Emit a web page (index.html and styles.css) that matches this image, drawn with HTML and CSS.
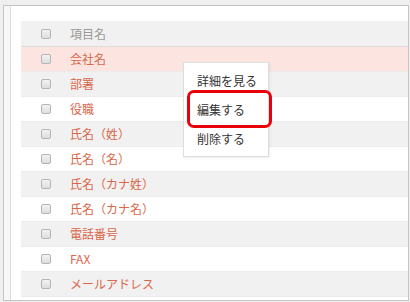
FILE: index.html
```html
<!DOCTYPE html>
<html lang="ja">
<head>
    <meta charset="UTF-8">
    <title>項目名一覧</title>
    <link rel="stylesheet" href="styles.css">
</head>
<body>
    <div class="window">
        <div class="panel">
            <div class="item-table">
                <div class="row head"><span class="check"></span><span class="label">項目名</span></div>
                <div class="row hover"><span class="check"></span><span class="label">会社名</span></div>
                <div class="row"><span class="check"></span><span class="label">部署</span></div>
                <div class="row"><span class="check"></span><span class="label">役職</span></div>
                <div class="row"><span class="check"></span><span class="label">氏名（姓）</span></div>
                <div class="row"><span class="check"></span><span class="label">氏名（名）</span></div>
                <div class="row"><span class="check"></span><span class="label">氏名（カナ姓）</span></div>
                <div class="row"><span class="check"></span><span class="label">氏名（カナ名）</span></div>
                <div class="row"><span class="check"></span><span class="label">電話番号</span></div>
                <div class="row"><span class="check"></span><span class="label">FAX</span></div>
                <div class="row"><span class="check"></span><span class="label">メールアドレス</span></div>
            </div>

            <!-- context menu -->
            <ul class="menu">
                <li>詳細を見る</li>
                <li>編集する</li>
                <li>削除する</li>
            </ul>
            <div class="callout"></div>
        </div>
    </div>
</body>
</html>
```

FILE: styles.css
```css
body {
    margin: 0;
    background-color: #efefef;
    font-family: "Noto Sans CJK JP", "Liberation Sans", sans-serif;
    font-size: 12px;
    height: 302px;
    overflow: hidden;
}

.window {
    margin: 5px 1px 0 3px;
    height: 294px;
    border: 1px solid #c4c4c4;
    background-color: #f7f7f7;
    padding-left: 6px;
}

/* White content area */
.panel {
    position: relative;
    height: 100%;
    box-sizing: border-box;
    border-left: 1px solid #dcdcdc;
    background-color: #fff;
    padding: 15px 0 0 10px;
    overflow: hidden;
}

.item-table {
    width: 400px;
}

.row {
    display: flex;
    align-items: center;
    height: 25px;
    box-sizing: border-box;
    border-bottom: 1px solid #ececec;
    color: #d9674a;
}

.row:nth-child(odd) {
    background-color: #f1f1f1;
}

.row.head {
    height: 26px;
    color: #999;
    border-bottom-color: #dcdcdc;
}

.row.hover {
    background-color: #fce5e1;
}

.check {
    width: 8px;
    height: 8px;
    margin-left: 20px;
    border: 1px solid #b5b5b5;
    border-radius: 2px;
    background: linear-gradient(#f2f2f2, #dedede);
}

.label {
    margin-left: 19px;
    line-height: 1;
}

/* Context menu */
.menu {
    position: absolute;
    left: 172px;
    top: 56px;
    width: 84px;
    margin: 0;
    padding: 3px 0;
    list-style: none;
    background-color: #fff;
    border: 1px solid #dedede;
    box-shadow: 1px 1px 2px rgba(0, 0, 0, 0.08);
}

.menu li {
    height: 29px;
    line-height: 29px;
    padding-left: 13px;
    color: #333;
}

.callout {
    position: absolute;
    left: 176px;
    top: 84px;
    width: 79px;
    height: 32px;
    border: 3px solid #e8000b;
    border-radius: 7px;
}
```
